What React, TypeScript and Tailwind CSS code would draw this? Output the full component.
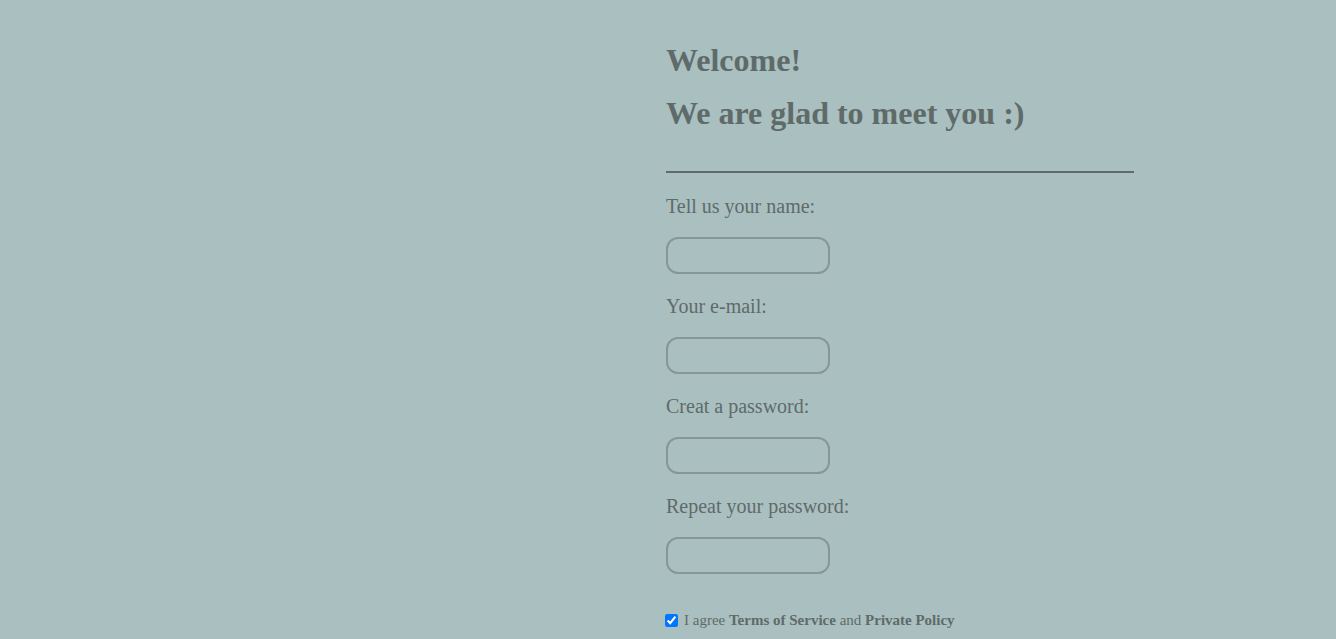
import React from "react";

const fields = [
  { label: "Tell us your name:", type: "text" },
  { label: "Your e-mail:", type: "email" },
  { label: "Creat a password:", type: "password" },
  { label: "Repeat your password:", type: "password" },
];

const SignUpPage: React.FC = () => {
  return (
    <main
      className="min-h-[639px] bg-[#aabfc0] text-[#5e6b69] grid grid-cols-[666px_1fr]"
      style={{ fontFamily: '"Liberation Serif", "Times New Roman", serif' }}
    >
      <div />
      <section className="pt-[42px]" aria-label="Sign up form">
        <h1 className="text-[32px] font-bold leading-[37px]">Welcome!</h1>
        <h1 className="text-[32px] font-bold leading-[37px] mt-[16px]">
          We are glad to meet you :)
        </h1>
        <hr className="w-[468px] border-0 border-t-2 border-[#5e6b69] mt-[39px]" />
        <form className="flex flex-col mt-[22px]">
          {fields.map((field, index) => (
            <label key={index} className="flex flex-col text-[20px] leading-[23px] mb-[21px]">
              {field.label}
              <input
                type={field.type}
                className="mt-[19px] w-[164px] h-[37px] rounded-[12px] border-2 border-[#859798] bg-transparent outline-none"
              />
            </label>
          ))}
          <div className="flex items-center mt-[17px] text-[15px] leading-[17px]">
            <input type="checkbox" defaultChecked className="w-[13px] h-[13px] mr-[6px] ml-[-1px]" />
            <span>
              I agree <b>Terms of Service</b> and <b>Private Policy</b>
            </span>
          </div>
        </form>
      </section>
    </main>
  );
};

export default SignUpPage;
